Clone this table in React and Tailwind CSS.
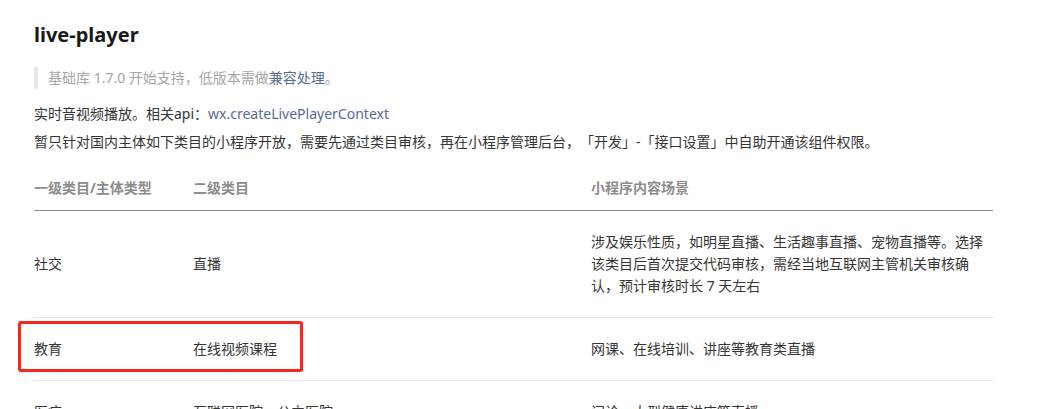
import React from 'react';

const rows = [
  {
    a: '社交',
    b: '直播',
    c: '涉及娱乐性质，如明星直播、生活趣事直播、宠物直播等。选择该类目后首次提交代码审核，需经当地互联网主管机关审核确认，预计审核时长 7 天左右',
  },
  { a: '教育', b: '在线视频课程', c: '网课、在线培训、讲座等教育类直播', mark: true },
  { a: '医疗', b: '互联网医院、公立医院', c: '问诊、大型健康讲座等直播' },
];

const App = () => {
  return (
    <div
      className="h-[409px] w-full overflow-hidden bg-white text-[14px] text-[#353535] [text-spacing-trim:space-all]"
      style={{ fontFamily: '"Noto Sans", "Noto Sans CJK SC", sans-serif' }}
    >
      <div className="w-[993px] pl-[34px] pt-[21px]">
        {/* Title */}
        <h1 className="text-[20px] font-bold leading-[28px] text-[#1a1a1a]">live-player</h1>

        {/* Note */}
        <div className="mt-[18px] border-l-4 border-[#e8e8e8] pl-[10px] leading-[22px] text-[#a6a6a6]">
          基础库 1.7.0 开始支持，低版本需做<span className="text-[#576b95]">兼容处理</span>。
        </div>

        <p className="mt-[11px] leading-[28px]">
          实时音视频播放。相关api：<span className="text-[#576b95]">wx.createLivePlayerContext</span>
        </p>
        <p className="leading-[28px]">
          暂只针对国内主体如下类目的小程序开放，需要先通过类目审核，再在小程序管理后台，「开发」-「接口设置」中自助开通该组件权限。
        </p>

        {/* Table */}
        <div className="mt-[10px]">
          <div className="grid grid-cols-[159px_398px_1fr] border-b border-[#8c8c8c] pt-[11px] pb-[11px] font-bold leading-[22px] text-[#8c8c8c]">
            <div>一级类目/主体类型</div>
            <div>二级类目</div>
            <div>小程序内容场景</div>
          </div>
          {rows.map((r) => (
            <div
              key={r.a}
              className="relative grid grid-cols-[159px_398px_1fr] items-center border-b border-[#e5e5e5] py-[20px] leading-[22px]"
            >
              <div>{r.a}</div>
              <div>{r.b}</div>
              <div className="pr-[10px]">{r.c}</div>
              {r.mark && (
                <div className="absolute left-[-16px] top-[3px] h-[51px] w-[285px] rounded-[3px] border-[3px] border-[#f8251c]" />
              )}
            </div>
          ))}
        </div>
      </div>
    </div>
  );
};

export default App;
